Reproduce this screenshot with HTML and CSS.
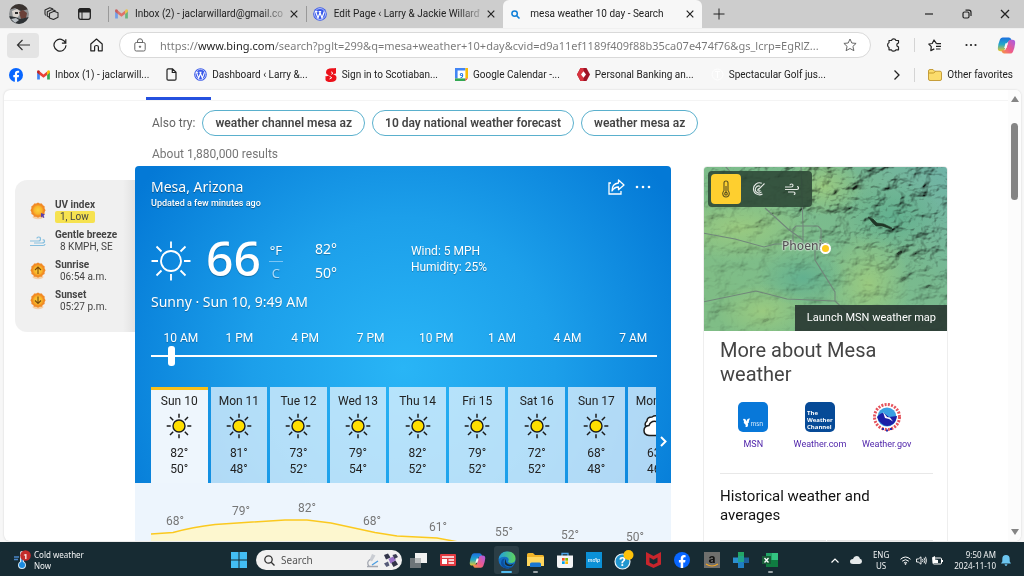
FILE: index.html
```html
<!DOCTYPE html>
<html lang="en">
<head>
<meta charset="utf-8">
<title>mesa weather 10 day - Search</title>
<link rel="stylesheet" href="styles.css">
</head>
<body>
<svg class="sprite" aria-hidden="true">
  <defs>
    <linearGradient id="cpA" x1="0" y1="0" x2="0" y2="1"><stop offset="0" stop-color="#1b6fe0"/><stop offset=".5" stop-color="#22a7c9"/><stop offset="1" stop-color="#e8c92c"/></linearGradient>
    <linearGradient id="cpB" x1="1" y1="0" x2="0" y2="1"><stop offset="0" stop-color="#a55de8"/><stop offset=".55" stop-color="#ee5a8b"/><stop offset="1" stop-color="#f99a3d"/></linearGradient>
    <linearGradient id="edgeA" x1="0" y1="0" x2="1" y2="0"><stop offset="0" stop-color="#1f9de0"/><stop offset="1" stop-color="#5fd45c"/></linearGradient>
    <radialGradient id="sunG"><stop offset="0" stop-color="#fcd03c"/><stop offset=".65" stop-color="#f8b62a"/><stop offset="1" stop-color="#f08a22"/></radialGradient>
  </defs>
  <symbol id="copilot" viewBox="0 0 20 20">
    <path d="M6 1.500h6.500q1.800 0 2.400 1.800l.8 2.500h-3q-1.600 0-2.100 1.600L8.200 14q-.6 2-2.600 2H3.800Q.6 16 .9 12.500 1.300 8 3.200 3.500 4 1.500 6 1.500z" fill="url(#cpA)"/>
    <path d="M14 18.500H7.500q-1.800 0-2.400-1.800L4.600 15h2.700q1.600 0 2.100-1.600L11.800 6q.6-2 2.600-2h1.800q3.200 0 2.900 3.500-.4 4.500-2.300 9-.8 2-2.800 2z" fill="url(#cpB)"/>
    <path d="M9 7.500h2.500L10 12.500H7.500z" fill="#f7f7f7"/>
  </symbol>
  <symbol id="gmail" viewBox="0 0 14 11">
    <path d="M0 1.500V10.500H3V5z" fill="#4285f4"/><path d="M14 1.500V10.500H11V5z" fill="#34a853"/>
    <path d="M3 1.700 7 5 11 1.700V5.400L7 8.600 3 5.400z" fill="#ea4335"/><path d="M0 1.500Q.5-.6 3 1.100V5.400L0 3z" fill="#c5221f"/><path d="M14 1.500Q13.500-.6 11 1.100V5.400L14 3z" fill="#fbbc04"/>
  </symbol>
  <symbol id="wp" viewBox="0 0 14 14">
    <circle cx="7" cy="7" r="6.800" fill="#3858e9"/><circle cx="7" cy="7" r="5.500" fill="none" stroke="#fff" stroke-width=".6"/>
    <path d="M2.700 4.700 5 11 7 5.600 9 11l2.300-6.500M2 4.600h2.500M5.600 4.600h2.600" fill="none" stroke="#fff" stroke-width="1.200"/>
  </symbol>
  <symbol id="fb" viewBox="0 0 16 16">
    <circle cx="8" cy="8" r="8" fill="#0866ff"/><path d="M6.700 15.900v-5.400H4.900V8h1.800V6.700C6.700 4.300 8 3.100 10 3.100l1.600.1v2.100h-.9C9.500 5.300 9.200 6 9.200 6.800V8h2.300l-.4 2.500H9.200v5.400z" fill="#fff"/>
  </symbol>
  <symbol id="x" viewBox="0 0 8 8"><path d="M.7.7 7.300 7.300M7.300.7.700 7.300" stroke="#222" stroke-width="1.200"/></symbol>
  <symbol id="daysun" viewBox="0 0 26 26">
    <circle cx="13" cy="13" r="6" fill="#ffdf00" stroke="#1c1c1c" stroke-width="1.400"/>
    <path d="M13 .7v4M13 21.300v4M.7 13h4M21.300 13h4M4 4l3.200 3.200M18.800 18.800 22 22M22 4l-3.200 3.200M7.200 18.800 4 22" stroke="#1c1c1c" stroke-width="1.500"/>
  </symbol>
  <symbol id="cog" viewBox="0 0 16 18">
    <ellipse cx="8" cy="15" rx="5.500" ry="2.200" fill="#f7b978" opacity=".6"/>
    <path d="M8 .5 9.800 1.500 11.900 1.500 12.900 3.300 14.600 4.300 14.600 6.400 15.600 8.200 14.600 10 14.600 12 12.800 13 11.800 14.800 9.800 14.800 8 15.800 6.200 14.800 4.200 14.800 3.200 13 1.400 12 1.400 10 .4 8.200 1.400 6.400 1.400 4.300 3.100 3.300 4.100 1.500 6.200 1.500z" fill="#f28a25"/>
    <circle cx="8" cy="8.200" r="5.800" fill="url(#sunG)"/>
  </symbol>
  <symbol id="chev" viewBox="0 0 8 12"><path d="M1.500 1.500 6 6 1.500 10.500" fill="none" stroke="currentColor" stroke-width="1.300"/></symbol>
</svg>

<header class="browser">
  <div class="tabstrip">
    <button class="plain slot" aria-label="Profile">
      <svg width="20" height="20" viewBox="0 0 20 20"><defs><clipPath id="av"><circle cx="10" cy="10" r="10"/></clipPath></defs><g clip-path="url(#av)"><path d="M0 0h20v20H0z" fill="#8d9092"/><path d="M0 0h20v5L12 7 6 4 0 6z" fill="#3a3330"/><path d="M3 7l5-2 4 3-3 5-5 1z" fill="#d9d4cf"/><path d="M10 8l4-2 4 3-1 5-5 1z" fill="#6a4038"/><path d="M0 12l6 1 5 2 9-2v7H0z" fill="#2d3134"/><path d="M2 15l5-1 3 2-4 3z" fill="#b9bfc4"/><path d="M6 8h3v2H6z" fill="#2b2b2b"/></g></svg>
    </button>
    <button class="plain slot" aria-label="Workspaces">
      <svg width="15" height="14" viewBox="0 0 15 14" fill="none" stroke="#2b2b2b" stroke-width="1.100" stroke-linejoin="round"><path d="M5.500 6.200 10 4.300l4 1.500v4.400l-4.500 2.300-4-1.600zM3.300 9.300V4.700L8 2.400l3.600 1.300M1 7.600V3L5.800.7l3.400 1.200M1 7.600l1.200.8M3.300 9.300l2.200 1"/></svg>
    </button>
    <button class="plain slot" aria-label="Tab actions">
      <svg width="13" height="12" viewBox="0 0 13 12"><rect x=".7" y=".7" width="11.600" height="10.600" rx="2" fill="none" stroke="#222" stroke-width="1.300"/><path d="M1 1h11v3H1zM4 3.500v8" stroke="#222" fill="#222"/></svg>
    </button>
    <nav class="tabs" aria-label="Open tabs">
      <div class="tab"><svg width="13" height="10" opacity=".65"><use href="#gmail"/></svg><a href="#" class="fade">Inbox (2) - jaclarwillard@gmail.co</a><button class="plain" aria-label="Close tab"><svg width="8" height="8"><use href="#x"/></svg></button></div>
      <div class="tab"><svg width="14" height="14"><use href="#wp"/></svg><a href="#" class="fade">Edit Page ‹ Larry &amp; Jackie Willard'</a><button class="plain" aria-label="Close tab"><svg width="8" height="8"><use href="#x"/></svg></button></div>
      <div class="tab active"><svg width="9" height="9" viewBox="0 0 9 9" fill="none" stroke="#0f7fd8" stroke-width="1.500"><circle cx="3.600" cy="3.600" r="2.700"/><path d="m5.600 5.600 2.900 2.900"/></svg><a href="#">mesa weather 10 day - Search</a><button class="plain" aria-label="Close tab"><svg width="8" height="8"><use href="#x"/></svg></button></div>
    </nav>
    <button class="plain slot" aria-label="New tab"><svg width="12" height="12" viewBox="0 0 12 12"><path d="M6 .5v11M.5 6h11" stroke="#222"/></svg></button>
    <div class="winctl">
      <button class="plain" aria-label="Minimize"><svg width="10" height="10"><path d="M1 5h8" stroke="#222" stroke-width="1.200"/></svg></button>
      <button class="plain" aria-label="Restore"><svg width="10" height="10" fill="none" stroke="#222" stroke-width="1.200"><rect x="1" y="3" width="6" height="6" rx="1.500"/><path d="M3.500 1.200h3.300q2.200 0 2.200 2.200V7"/></svg></button>
      <button class="plain" aria-label="Close"><svg width="10" height="10"><path d="m1 1 8 8M9 1 1 9" stroke="#222" stroke-width="1.300"/></svg></button>
    </div>
  </div>

  <div class="toolbar">
    <button class="plain back" aria-label="Back"><svg width="15" height="12" viewBox="0 0 15 12" fill="none" stroke="#333" stroke-width="1.200"><path d="M14 6H1.500M6.500 1l-5 5 5 5"/></svg></button>
    <button class="plain nav" aria-label="Refresh"><svg width="14" height="14" viewBox="0 0 14 14" fill="none" stroke="#222" stroke-width="1.200"><path d="M12.600 5A6 6 0 1 0 13 7.300M12.800 1.200v4H8.900"/></svg></button>
    <button class="plain nav" aria-label="Home"><svg width="13" height="14" viewBox="0 0 13 14" fill="none" stroke="#222" stroke-width="1.200"><path d="M.8 6 6.500 1l5.700 5v6.800H8.400V9q0-1.500-1.900-1.500T4.600 9v3.800H.8z" stroke-linejoin="round"/></svg></button>
    <div class="address">
      <svg width="12" height="14" viewBox="0 0 12 14" fill="none" stroke="#666"><rect x=".8" y="4.500" width="10.400" height="8.500" rx="1.500"/><path d="M3.500 4.500V3Q3.500.8 6 .8T8.500 3v1.500"/><circle cx="6" cy="8.700" r=".7" fill="#666"/></svg>
      <input type="text" aria-label="Address" value="https://www.bing.com/search?pglt=299&amp;q=mesa+weather+10+day&amp;cvid=d9a11ef1189f409f88b35ca07e474f76&amp;gs_lcrp=EgRlZ...">
      <button class="plain" aria-label="Add to favorites"><svg width="14" height="14" viewBox="0 0 14 14" fill="none" stroke="#666"><path d="m7 1 1.800 4 4.300.4-3.200 3 1 4.300L7 10.500l-3.900 2.200 1-4.300-3.200-3L5.200 5z" stroke-linejoin="round"/></svg></button>
    </div>
    <button class="plain ext" aria-label="Extensions"><svg width="14" height="14" viewBox="0 0 14 14" fill="none" stroke="#222" stroke-width="1.200"><path d="M2 2.500h2.500Q5 .9 6.700.9T9 2.500h2.500V5Q9.800 5.200 9.800 6.900t1.700 1.900v3H9Q8.500 13.200 6.700 13.200T4.500 11.800H2V9.500Q.6 8.800.6 7T2 4.700z" stroke-linejoin="round"/></svg></button>
    <i class="vsep"></i>
    <button class="plain" aria-label="Favorites"><svg width="14" height="13" viewBox="0 0 14 13" fill="none" stroke="#222" stroke-width="1.200"><path d="M8.500 4.600 6 1 4.200 4.500.8 5l2.500 2.600-.5 4 3.500-1.700M8.500 4.600H13M8 7.300h5M8 10h4.500" stroke-linejoin="round"/></svg></button>
    <button class="plain dots" aria-label="Settings and more"><svg width="12" height="4" fill="#222"><circle cx="1.500" cy="2" r="1.100"/><circle cx="6" cy="2" r="1.100"/><circle cx="10.500" cy="2" r="1.100"/></svg></button>
    <button class="plain" aria-label="Copilot"><svg width="19" height="19"><use href="#copilot"/></svg></button>
  </div>

  <nav class="bookmarks" aria-label="Favorites bar">
    <a href="#" aria-label="Facebook"><svg width="14" height="14"><use href="#fb"/></svg></a>
    <a href="#"><svg width="13" height="10"><use href="#gmail"/></svg><span>Inbox (1) - jaclarwill...</span></a>
    <a href="#" aria-label="Page"><svg width="11" height="13" viewBox="0 0 11 13" fill="none" stroke="#222" stroke-width="1.200"><path d="M1 2q0-1.200 1.200-1.200H6.500L10 4.300V11q0 1.200-1.200 1.200H2.200Q1 12.200 1 11zM6.300 1v3.500H10"/></svg></a>
    <a href="#"><svg width="13" height="13"><use href="#wp"/></svg><span>Dashboard ‹ Larry &amp;...</span></a>
    <a href="#"><svg width="12" height="14" viewBox="0 0 12 14"><path d="M11 0Q9 .3 7 .3 1 .5 1 4.200 1 6.500 4 7.300 1.700 8.500.500 8V12q1 2 5 2 6 0 6-4.300 0-2.600-3.500-3.500L11 5.500z" fill="#ec111a"/><path d="M6 3.700 8 5.300 6.300 6.300M4.500 8.300 6.800 9.700 4.500 11" stroke="#f7f7f7" fill="none"/></svg><span>Sign in to Scotiaban...</span></a>
    <a href="#"><svg width="13" height="13" viewBox="0 0 13 13"><path d="M0 0h13v13H0z" fill="#fff"/><path d="M0 0h10.500v2.600H2.600v8H0z" fill="#4285f4"/><path d="M10.400 0H13v10.400h-2.600z" fill="#fbbc04"/><path d="M0 10.400h10.400V13H0z" fill="#34a853"/><path d="M10.400 10.400H13L10.400 13z" fill="#ea4335"/><text x="6.500" y="9.500" class="cal">9</text></svg><span>Google Calendar -...</span></a>
    <a href="#"><svg width="13" height="13" viewBox="0 0 13 13"><path d="M3.500 0h6L13 6.500 9.500 13h-6L0 6.500z" fill="#a01226"/><path d="M3.500 0h3v4L4 6.500 6.500 9v4h-3L0 6.500z" fill="#d8333e"/><path d="M6.500 3.300 9 6.500 6.500 9.700 4 6.500z" fill="#fff"/></svg><span>Personal Banking an...</span></a>
    <a href="#"><svg width="13" height="13" viewBox="0 0 13 13" fill="none" stroke="#fff"><circle cx="6.500" cy="6.500" r="5.500"/><path d="M4 3.500h5M6.500 3.500v6.500"/></svg><span>Spectacular Golf jus...</span></a>
    <div class="bmend">
      <button class="plain" aria-label="More favorites"><svg width="8" height="12"><use href="#chev"/></svg></button>
      <i class="vsep"></i>
      <a href="#"><svg width="14" height="12" viewBox="0 0 14 12"><path d="M.5 2Q.5.5 2 .5h3l1.500 1.700H12q1.500 0 1.500 1.500V10q0 1.500-1.500 1.500H2Q.5 11.500.5 10z" fill="#fbdc6c" stroke="#b98a1c" stroke-width=".8"/><path d="M.8 4h5l1.500-1.500" fill="none" stroke="#b98a1c" stroke-width=".8"/></svg><span>Other favorites</span></a>
    </div>
  </nav>
</header>

<div class="viewport">
  <main class="page">
    <nav class="scope" aria-label="Search scope"><a href="#" aria-label="All results"></a></nav>
    <div class="try"><span>Also try:</span><a href="#">weather channel mesa az</a><a href="#">10 day national weather forecast</a><a href="#">weather mesa az</a></div>
    <p class="count">About 1,880,000 results</p>

    <div class="cols">
      <aside class="facts">
        <div class="fact"><svg width="16" height="18"><use href="#cog"/><path d="m11 11 4 1.500-1.500 1.200 1 1.500-1.200.8-1-1.500-1.300 1z" fill="#5b3fa8"/></svg><dl><dt>UV index</dt><dd class="low">1, Low</dd></dl></div>
        <div class="fact"><svg width="16" height="12" viewBox="0 0 16 12" fill="none" stroke="#86bfdf" stroke-width="1.200"><path d="M0 6h8.500q2 0 2-2T8.700 2 7 3.500M4 8h8q2.500 0 2.500-1.700T12.700 4.800M0 10.500h13q2 0 2-1.500"/></svg><dl><dt>Gentle breeze</dt><dd>8 KMPH, SE</dd></dl></div>
        <div class="fact"><svg width="16" height="18"><use href="#cog"/><path d="M8 12V5M5 8l3-3 3 3" fill="none" stroke="#7a4a0a" stroke-width="1.100"/></svg><dl><dt>Sunrise</dt><dd>06:54 a.m.</dd></dl></div>
        <div class="fact"><svg width="16" height="18"><use href="#cog"/><path d="M8 4.500v7M5 8.500l3 3 3-3" fill="none" stroke="#7a4a0a" stroke-width="1.100"/></svg><dl><dt>Sunset</dt><dd>05:27 p.m.</dd></dl></div>
      </aside>

      <section class="weather">
        <div class="sky">
          <div class="whead">
            <div><h2>Mesa, Arizona</h2><p class="upd">Updated a few minutes ago</p></div>
            <div class="acts">
              <button class="plain" aria-label="Share"><svg width="17" height="16" viewBox="0 0 17 16" fill="none" stroke="#fff" stroke-width="1.300"><path d="M3 4H1v11h12v-3"/><path d="M10.500 1 16 6l-5.500 4.700V8Q6.500 7.800 4 12q0-7.500 6.500-8z" stroke-linejoin="round"/></svg></button>
              <button class="plain" aria-label="More"><svg width="16" height="4" fill="#fff"><circle cx="2" cy="2" r="1.300"/><circle cx="8" cy="2" r="1.300"/><circle cx="14" cy="2" r="1.300"/></svg></button>
            </div>
          </div>
          <div class="now">
            <svg width="40" height="40" viewBox="0 0 40 40" fill="none" stroke="#fff" stroke-width="1.800"><circle cx="20" cy="20" r="10"/><path d="M20 .5v6.500M20 33v6.500M.5 20H7M33 20h6.500M5.500 5.500l5 5M29.500 29.500l5 5M34.500 5.500l-5 5M10.500 29.500l-5 5"/></svg>
            <strong>66</strong>
            <div class="units"><a href="#">°F</a><a href="#" class="c">C</a></div>
            <div class="hilo"><span>82°</span><span>50°</span></div>
            <div class="wind">Wind: 5 MPH<br>Humidity: 25%</div>
          </div>
          <p class="cond">Sunny · Sun 10, 9:49 AM</p>
          <div class="hours"><span>10 AM</span><span>1 PM</span><span>4 PM</span><span>7 PM</span><span>10 PM</span><span>1 AM</span><span>4 AM</span><span>7 AM</span></div>
          <input class="time" type="range" min="0" max="200" value="7" aria-label="Hour of day">
          <div class="dayrow">
            <div class="days">
              <button class="day on"><span>Sun 10</span><svg width="26" height="26"><use href="#daysun"/></svg><span>82°</span><span>50°</span></button>
              <button class="day"><span>Mon 11</span><svg width="26" height="26"><use href="#daysun"/></svg><span>81°</span><span>48°</span></button>
              <button class="day"><span>Tue 12</span><svg width="26" height="26"><use href="#daysun"/></svg><span>73°</span><span>52°</span></button>
              <button class="day"><span>Wed 13</span><svg width="26" height="26"><use href="#daysun"/></svg><span>79°</span><span>54°</span></button>
              <button class="day"><span>Thu 14</span><svg width="26" height="26"><use href="#daysun"/></svg><span>82°</span><span>52°</span></button>
              <button class="day"><span>Fri 15</span><svg width="26" height="26"><use href="#daysun"/></svg><span>79°</span><span>52°</span></button>
              <button class="day"><span>Sat 16</span><svg width="26" height="26"><use href="#daysun"/></svg><span>72°</span><span>52°</span></button>
              <button class="day"><span>Sun 17</span><svg width="26" height="26"><use href="#daysun"/></svg><span>68°</span><span>48°</span></button>
              <button class="day"><span>Mon 18</span><svg width="26" height="26" viewBox="0 0 26 26" fill="#fff" stroke="#1c1c1c" stroke-width="1.500"><path d="M3.500 14q-3-3 .5-6 0-4 5-4 4-3 8 1 6 0 5 6v5H8z"/><path d="M6 22.500q-5-.5-5-5t5-5q2-5 7-4t6 5q5 0 5 4.500t-5 4.500z"/></svg><span>63°</span><span>46°</span></button>
            </div>
            <button class="plain next" aria-label="Next days"><svg width="7" height="11" viewBox="0 0 7 11"><path d="M1 1l4.500 4.500L1 10" fill="none" stroke="#fff" stroke-width="2"/></svg></button>
          </div>
        </div>
        <svg class="chart" viewBox="0 0 536 90" role="img" aria-label="Hourly temperatures">
          <path d="M16 51 38 49.500Q58 44 80 41.500L150 37H172L196 40 240 49.500 262 53 302 55 345 63 520 76V90H16z" fill="#fdf7cf"/>
          <path d="M16 51 38 49.500Q58 44 80 41.500L150 37H172L196 40 240 49.500 262 53 302 55 345 63 520 76" fill="none" stroke="#fbc91f" stroke-width="1.500"/>
          <text x="40" y="42">68°</text><text x="106" y="32">79°</text><text x="172" y="29">82°</text><text x="237" y="42">68°</text><text x="303" y="48">61°</text><text x="369" y="53">55°</text><text x="435" y="56">52°</text><text x="500" y="58">50°</text>
        </svg>
      </section>

      <aside class="side">
        <div class="map">
          <svg class="terrain" viewBox="0 0 245 165" preserveAspectRatio="xMidYMid slice" aria-hidden="true">
            <defs>
              <linearGradient id="land" x1="0" y1=".6" x2="1" y2="0"><stop offset="0" stop-color="#7fbd86"/><stop offset=".35" stop-color="#7dbd8c"/><stop offset=".65" stop-color="#78b98f"/><stop offset="1" stop-color="#6fb3a8"/></linearGradient>
              <radialGradient id="warm"><stop offset="0" stop-color="#9aca80"/><stop offset="1" stop-color="#9aca80" stop-opacity="0"/></radialGradient>
              <radialGradient id="cool"><stop offset="0" stop-color="#62b08f"/><stop offset="1" stop-color="#62b08f" stop-opacity="0"/></radialGradient>
              <filter id="relief" x="0" y="0" width="1" height="1"><feTurbulence type="fractalNoise" baseFrequency=".05 .07" numOctaves="5" seed="8"/><feDiffuseLighting surfaceScale="9" diffuseConstant="1.200" lighting-color="#fff"><feDistantLight azimuth="225" elevation="55"/></feDiffuseLighting></filter>
              <linearGradient id="mg" x1=".3" y1=".75" x2=".62" y2=".32"><stop offset="0" stop-color="#333"/><stop offset=".6" stop-color="#555"/><stop offset="1" stop-color="#ddd"/></linearGradient>
              <mask id="hills"><path d="M0 0h245v165H0z" fill="url(#mg)"/></mask>
            </defs>
            <path d="M0 0h245v165H0z" fill="url(#land)"/>
            <ellipse cx="35" cy="62" rx="75" ry="34" fill="url(#warm)"/><ellipse cx="165" cy="118" rx="42" ry="55" fill="url(#warm)"/><ellipse cx="60" cy="145" rx="48" ry="28" fill="url(#warm)"/><ellipse cx="120" cy="20" rx="40" ry="30" fill="url(#warm)"/>
            <ellipse cx="100" cy="112" rx="45" ry="28" fill="url(#cool)"/><ellipse cx="190" cy="50" rx="50" ry="35" fill="url(#cool)"/>
            <g mask="url(#hills)" class="mul"><path d="M0 0h245v165H0z" filter="url(#relief)"/></g>
            <path d="M0 67 32 73 61 81 72 78 90 78M22 0l9 10M62 42 85 63 100 74M98 0l2 60M90 78V63l3-3h22l3 3v16M100 60v18M112 84v10l20 32v9M0 136l53-11 31 8 48 2M132 135l32 30" fill="none" stroke="#71867a" stroke-width="1.100"/>
            <path d="M165 51l5 2 4 4 7 1 8 4-1 1-9-3-6 0-4-4z" fill="#203527" stroke="#203527" stroke-width=".6"/>
          </svg>
          <div class="layers">
            <button class="plain lit" aria-label="Temperature"><svg width="8" height="18" viewBox="0 0 8 18" fill="none" stroke="#5b5020" stroke-width="1.100"><path d="M2 10.500V3q0-2 2-2t2 2v7.500Q7.300 12 7.300 13.500 7 17 4 17T.7 13.500Q.7 12 2 10.500zM4 6v7"/><circle cx="4" cy="13.700" r="1.300"/></svg></button>
            <button class="plain" aria-label="Radar"><svg width="15" height="14" viewBox="0 0 15 14" fill="none" stroke="#e4e8e4" stroke-width="1.100"><path d="M10.800 1.300A6 6 0 1 0 11.500 12M9.200 4.200A3.500 3.500 0 1 0 10.500 9.800M8.500 6.800A1.200 1.200 0 1 0 9.200 8.200M7.500 7.500 13.500 1.500"/></svg></button>
            <button class="plain" aria-label="Wind"><svg width="14" height="12" viewBox="0 0 14 12" fill="none" stroke="#e4e8e4" stroke-width="1.200"><path d="M0 4h6q2 0 2-1.500T6.500 1 5 2.300M0 6.500h11.500q2 0 2-1.500t-1.500-1.400M3 9h5.500q1.500 0 1.500 1.200t-1.200 1.300"/></svg></button>
          </div>
          <span class="city">Phoenix</span><i class="pin"></i>
          <a class="launch" href="#">Launch MSN weather map</a>
        </div>
        <div class="more">
          <h2>More about Mesa weather</h2>
          <div class="links">
            <a href="#"><svg width="30" height="30" viewBox="0 0 30 30"><rect width="30" height="30" rx="5" fill="#0878d9"/><path d="M5 17q3-1 3.500 2.500Q9 16 12 16.500q-1 2-1.200 3 .8 1-1 2 1 1-.5 3.500H7.500q.7-2-.5-3-2-1-1-2.500z" fill="#fff"/><text x="12.500" y="24" class="msn">msn</text></svg>MSN</a>
            <a href="#"><svg width="30" height="30" viewBox="0 0 30 30"><rect width="30" height="30" rx="5" fill="#064a97"/><g class="twc"><text x="2" y="13">The</text><text x="2" y="20">Weather</text><text x="2" y="27">Channel</text></g></svg>Weather.com</a>
            <a href="#"><svg width="30" height="30" viewBox="0 0 30 30"><circle cx="15" cy="15" r="12.500" fill="none" stroke="#e5535c" stroke-width="3" stroke-dasharray="2 1.300"/><circle cx="15" cy="15" r="10.500" fill="#fff"/><circle cx="15" cy="15" r="9.500" fill="#3aa0e2"/><path d="M5 15q5-6 8-3l4 3 8-1q-1 6-4 8-6 4-11 0-4-3-5-7z" fill="#1c1fa6"/><path d="m11 10 4 5 3 .5 3 4-4-2.500-4-1z" fill="#fff"/><path d="M10 27h2M14 28.500h2M18 27h2" stroke="#2a2fa8" stroke-width="2"/></svg>Weather.gov</a>
          </div>
          <h3>Historical weather and averages</h3>
          <div class="bars"><i></i><i></i></div>
        </div>
      </aside>
    </div>
  </main>
  <div class="scroll" aria-hidden="true"><svg width="8" height="6"><path d="M4 0l4 6H0z" fill="#858585"/></svg><i></i><svg width="8" height="6"><path d="M0 0h8L4 6z" fill="#858585"/></svg></div>
</div>

<footer class="taskbar">
  <a class="news" href="#"><svg width="18" height="20" viewBox="0 0 18 20"><path d="M1 7h5M1 9.500h4" stroke="#4a86c8" stroke-width="1.500"/><path d="M7 3q0-2 2-2t2 2v8.500q2 1.200 2 3.500 0 4-4 4t-4-4q0-2.300 2-3.500z" fill="#d7ebf8"/><circle cx="9" cy="15" r="3" fill="#1c8be0"/><path d="M8.300 7h1.500v7H8.300z" fill="#1c8be0"/><circle cx="12.500" cy="5.500" r="5.300" fill="#c42b2b"/><text x="12.500" y="8.500" class="badge">1</text></svg><span>Cold weather<br>Now</span></a>
  <button class="plain start" aria-label="Start"><svg width="16" height="16"><path d="M0 0h7.500v7.500H0zM8.500 0H16v7.500H8.500zM0 8.500h7.500V16H0zM8.500 8.500H16V16H8.500z" fill="#43bdf3"/></svg></button>
  <label class="search"><svg width="11" height="11" viewBox="0 0 11 11" fill="none" stroke="#333" stroke-width="1.300"><circle cx="4.500" cy="4.500" r="3.700"/><path d="m7.200 7.200 3.300 3.300"/></svg><input type="search" placeholder="Search" aria-label="Search"><svg width="32" height="15" viewBox="0 0 32 15"><path d="M6 1l3.500 1.500-3.500 6-2.500-1.500z" fill="#c9ccd2"/><path d="M4 6.500q-4 3-1 6.500M1 13.500h11" fill="none" stroke="#a3a7b0" stroke-width="1.300"/><path d="M6 12l6-4" stroke="#4c9de0" stroke-width="1.300"/><path d="M18 2l4-1.500 2.500 4-4.500 2zM25 9.500l4.500-2 2.500 4-4.500 2.500z" fill="#33354a"/><path d="M22.500 6l4.500-2.500L30 7l-5.500 3.500z" fill="#9a72c9"/><path d="M18 10.500l4-2 1.500 4-3 1.500z" fill="#565b78"/><path d="M26.500 2l3.500-1 2 3-3.500 2z" fill="#3c3e55"/></svg></label>
  <nav class="apps" aria-label="Taskbar">
    <button class="plain" aria-label="Task view"><svg width="17" height="15"><path d="M0 5h11v10H0z" fill="#6d7478"/><path d="M5 0h12v10H5z" fill="#f1f1f1"/><path d="M5 5h6v5H5z" fill="#b9bcbd"/></svg></button>
    <button class="plain" aria-label="News"><svg width="16" height="12"><rect width="16" height="12" rx="1" fill="#e33a40"/><path d="M2 3h12M8.500 6h5.500M8.500 9h5.500" stroke="#fff" stroke-width="1.300"/><path d="M2 5h5v5H2z" fill="#fff"/></svg></button>
    <button class="plain" aria-label="Copilot"><svg width="17" height="17"><use href="#copilot"/></svg></button>
    <button class="plain run cur" aria-label="Edge"><svg width="18" height="18" viewBox="0 0 18 18"><circle cx="9" cy="9" r="8.500" fill="#1470c4"/><path d="M.7 8Q2 .5 9 .5q8 0 8.500 7 0 4-4 4.500-3 0-3.500-1.500 2-3-1.500-4.500Q4 5 .7 8z" fill="url(#edgeA)"/><path d="M7 7.500Q4 11 7 14.500t9 0q-3 3-7 3-6-.5-6-6 .5-4 4-4z" fill="#0c4f9e"/><path d="M8 8q-1 4 3 5.500 3 .5 5-1-2 3.500-6 2.500T7 11q-.3-2 1-3z" fill="#172b33"/></svg></button>
    <button class="plain run" aria-label="File Explorer"><svg width="17" height="14"><path d="M0 1.500Q0 0 1.500 0H6l2 2h7.500Q17 2 17 3.500V13H0z" fill="#f0b429"/><path d="M0 4h17v9H0z" fill="#ffd75e"/><path d="M3 14v-3q0-1.500 1.500-1.500h8Q14 9.500 14 11v3z" fill="#1976d2"/></svg></button>
    <button class="plain" aria-label="Store"><svg width="16" height="16"><path d="M5 4V1.500h6V4" fill="none" stroke="#4aa3e6" stroke-width="1.300"/><path d="M0 3.500h16V14q0 2-2 2H2q-2 0-2-2z" fill="#f3f5f6"/><path d="M5 6h2.700v2.700H5z" fill="#f25022"/><path d="M8.300 6H11v2.700H8.300z" fill="#7fba00"/><path d="M5 9.300h2.700V12H5z" fill="#00a4ef"/><path d="M8.300 9.300H11V12H8.300z" fill="#ffb900"/></svg></button>
    <button class="plain" aria-label="mdip"><svg width="16" height="16"><path d="M0 0h16v16H0z" fill="#0b91d6"/><text x="8" y="10" class="mydp">mdip</text></svg></button>
    <button class="plain" aria-label="Help"><svg width="20" height="20" viewBox="0 0 20 20"><circle cx="8.500" cy="11.500" r="7.500" fill="#2196cf" stroke="#e8f4fa" stroke-width="1.200"/><text x="8.500" y="16" class="help">?</text><circle cx="14.500" cy="5" r="5" fill="#fdc20a"/></svg></button>
    <button class="plain" aria-label="McAfee"><svg width="15" height="16"><path d="M0 0 7.500 4 15 0v12.500L7.500 16 0 12.500zM3.500 5.500v5L7.500 12.500l4-2v-5L7.500 7.700z" fill="#c8252c" fill-rule="evenodd"/></svg></button>
    <button class="plain" aria-label="Facebook"><svg width="16" height="16"><use href="#fb"/></svg></button>
    <button class="plain" aria-label="Amazon"><svg width="16" height="16"><path d="M0 0h16v16H0z" fill="#6f6f6d"/><text x="8" y="11" class="amz">a</text><path d="M2 12q6 4 12 0" fill="none" stroke="#f5a623" stroke-width="1.200"/></svg></button>
    <button class="plain" aria-label="Health"><svg width="16" height="16"><path d="M5 0h6v6H5z" fill="#23a566"/><path d="M5 5h6v11H5z" fill="#1f7fc4"/><path d="M0 5.500h5.500v5.500H0z" fill="#2b8fd0"/><path d="M10.500 5.500H16v5.500h-5.500z" fill="#1d5f9b"/><path d="M5 4h6v6H5z" fill="#20a38a"/></svg></button>
    <button class="plain run" aria-label="Excel"><svg width="16" height="14"><path d="M4 0h12v14H4z" fill="#21a366"/><path d="M10 0h6v7h-6z" fill="#33c481"/><path d="M4 7h12v7H4z" fill="#107c41"/><path d="M0 3h9v8H0z" fill="#185c37"/><path d="m2.500 5 4 4.500M6.500 5l-4 4.500" stroke="#fff" stroke-width="1.300"/></svg></button>
  </nav>
  <div class="tray">
    <button class="plain" aria-label="Hidden icons"><svg width="8" height="5"><path d="M.5 4.500 4 1l3.500 3.500" fill="none" stroke="#fff" stroke-width="1.200"/></svg></button>
    <svg width="12" height="8" viewBox="0 0 12 8"><path d="M3 8Q0 8 0 5.500T3 3q1-3 4-3 2.500 0 3 2.700 2 .3 2 2.700T9.500 8z" fill="#e6eaeb"/></svg>
    <span class="lang">ENG<br>US</span>
    <span class="net">
      <svg width="11" height="9" viewBox="0 0 11 9" fill="none" stroke="#fff"><path d="M.5 3.300Q5.500-1.300 10.500 3.300M2.200 5.200q3.300-3 6.600 0M3.900 7q1.600-1.400 3.200 0"/><circle cx="5.500" cy="8" r=".5"/></svg>
      <svg width="11" height="9" viewBox="0 0 11 9" fill="none" stroke="#fff"><path d="M.5 3h1.800L5 .8v7.400L2.300 6H.5zM6.500 3q1 1.500 0 3M8 1.800q2 2.700 0 5.400M9.500.8q2 3.700 0 7.400" stroke-width=".9"/></svg>
      <svg width="11" height="9" viewBox="0 0 11 9"><rect x="1" y="2" width="8.500" height="6" rx="1" fill="none" stroke="#fff"/><path d="M0 1.500 3 0v3.500L6 4v3H1z" fill="#fff"/><path d="M10 4h1v2h-1z" fill="#fff"/></svg>
    </span>
    <time>9:50 AM<br>2024-11-10</time>
    <button class="plain" aria-label="Notifications"><svg width="10" height="11" viewBox="0 0 10 11"><path d="M5 0q3.700 0 3.700 4v2.500L10 8.500H0l1.300-2V4Q1.300 0 5 0zM3.500 9.300h3Q6 11 5 11T3.500 9.300z" fill="#6cc5f0"/></svg></button>
  </div>
</footer>
</body>
</html>
```
FILE: styles.css
```css
* { box-sizing: border-box; }
body {
  margin: 0;
  height: 100vh;
  display: flex;
  flex-direction: column;
  overflow: hidden;
  background: #f7f7f7;
  color: #222;
  font: 12px/16px Roboto, "Liberation Sans", sans-serif;
}
h2, h3, p, dl, dd { margin: 0; font-weight: 400; }
a { color: inherit; text-decoration: none; }
svg { display: block; flex: none; }
.sprite { position: absolute; width: 0; height: 0; }
input { font: inherit; border: 0; background: none; padding: 0; min-width: 0; }
.plain {
  border: 0;
  padding: 0;
  background: none;
  color: #222;
  display: flex;
  align-items: center;
  justify-content: center;
}
.vsep { width: 1px; height: 14px; background: #d4d4d4; }

/* Browser chrome */
.browser { flex: none; font-size: 10px; }
.tabstrip { display: flex; height: 28px; background: #cdcdcd; padding-left: 2px; }
.slot { width: 33px; }
.tabs { display: flex; flex: 0 1 594px; min-width: 0; margin-left: 7px; }
.tab {
  flex: 1 1 0;
  min-width: 0;
  display: flex;
  align-items: center;
  gap: 7px;
  padding: 0 8px 0 7px;
  position: relative;
}
.tab a { flex: 1; overflow: hidden; white-space: nowrap; }
.tab:not(.active)::before {
  content: "";
  width: 1px;
  height: 16px;
  background: #999;
  position: absolute;
  left: 0;
}
.tab.active { background: #f7f7f7; border-radius: 6px 6px 0 0; gap: 10px; padding-left: 8px; }
.fade { mask-image: linear-gradient(90deg, #000 85%, #0004); }
.winctl { display: flex; margin-left: auto; }
.winctl button { width: 38px; }

.toolbar { display: flex; align-items: center; height: 33px; padding: 0 8px 0 7px; gap: 13px; border-top: 1px solid #f0f0f0; }
.back { width: 32px; height: 25px; background: #e4e4e4; border-radius: 4px; }
.nav { width: 16px; }
.nav + .nav { margin: 0 5px 0 7px; }
.address {
  flex: 1;
  display: flex;
  align-items: center;
  gap: 14px;
  height: 26px;
  margin-left: -3px;
  padding: 0 13px 0 14px;
  background: #fff;
  border: 1px solid #d9d9d9;
  border-radius: 13px;
}
.address input {
  flex: 1;
  height: 20px;
  font-family: "Noto Sans", "Open Sans", sans-serif;
  font-size: 11px;
  color: transparent;
  background: linear-gradient(90deg, #777 38px, #1d1d1d 38px 115px, #777 115px);
  background-clip: text;
}
.ext { margin-left: 3px; }
.dots { margin: 0 7px 0 10px; }

.bookmarks { display: flex; align-items: center; height: 29px; padding: 0 11px 2px 9px; white-space: nowrap; }
.bookmarks a { display: flex; align-items: center; gap: 5px; margin-right: 17px; }
.bookmarks > a:first-child { margin-right: 14px; }
.bookmarks .bmend a { margin: 0; }
.bmend { display: flex; align-items: center; gap: 13px; margin-left: auto; }
.cal { font: 700 7px Roboto, sans-serif; fill: #1a73e8; text-anchor: middle; }

/* Page frame */
.viewport {
  flex: 1;
  min-height: 0;
  display: flex;
  margin: 0 3px 1px 4px;
  background: #fff;
  border-radius: 6px;
  overflow: hidden;
  box-shadow: 0 0 2px #ccc;
}
.page { flex: 1; min-width: 0; overflow: hidden; }
.scroll { width: 13px; display: flex; flex-direction: column; align-items: center; padding: 6px 0; background: #fcfcfc; }
.scroll i { width: 7px; height: 77px; margin: 21px 0 auto; border-radius: 4px; background: #858585; }

.scope { height: 11px; padding-left: 142px; border-bottom: 1px solid #f4f4f4; }
.scope a { display: block; width: 65px; height: 10px; border-bottom: 3px solid #2450df; }
.try { display: flex; align-items: center; gap: 7px; padding: 9px 0 0 148px; color: #666; white-space: nowrap; }
.try a { height: 26px; padding: 4px 12px; border: 1px solid #5ab0cd; border-radius: 13px; font-weight: 600; color: #444; }
.count { padding: 10px 0 4px 148px; color: #767676; }

.cols {
  display: grid;
  grid-template-columns: 120px minmax(0, 536fr) minmax(0, 277fr);
  padding: 0 60px 0 11px;
  align-items: start;
}

.facts {
  display: grid;
  gap: 6px;
  margin-top: 14px;
  padding: 19px 0 19px 15px;
  border-radius: 12px 0 0 12px;
  background: linear-gradient(90deg, #f0f0f0 90%, #e2e2e2);
  font-size: 10px;
  line-height: 12px;
  color: #444;
}
.fact { display: flex; align-items: center; gap: 9px; height: 24px; }
.fact dt { font-weight: 700; }
.fact dd { padding-left: 5px; }
.fact .low { background: #f6e250; border-radius: 2px; }

/* Weather card */
.weather { border-radius: 4px 4px 0 0; overflow: hidden; background: #edf5fd; }
.sky {
  padding: 11px 0 0 16px;
  color: #fff;
  background: radial-gradient(circle at 50% 64%, #29b5f6, #1c9fea 45%, #0479d6 95%);
}
.whead { display: flex; justify-content: space-between; padding-right: 20px; text-shadow: 0 1px 1px #0006; }
.whead h2, .cond, .now { font-family: "Noto Sans", "Open Sans", sans-serif; }
.whead h2 { font-size: 14px; line-height: 20px; }
.upd { font-size: 9px; line-height: 12px; font-weight: 500; }
.acts { display: flex; gap: 10px; height: 20px; }
.now { display: flex; align-items: center; height: 52px; margin-top: 26px; text-shadow: 0 1px 1px #0004; }
.now strong { margin: 0 8px 6px 15px; font-size: 48px; line-height: 52px; font-weight: 500; }
.units { display: grid; width: 14px; margin-right: 32px; font-size: 13px; line-height: 22px; text-align: center; }
.units .c { border-top: 1px solid #7cc6f5; color: #a9dafa; }
.hilo { display: grid; width: 96px; font-size: 14px; line-height: 24px; }
.wind { margin-bottom: 4px; font: 12px/16px Roboto, sans-serif; }
.cond { margin-top: 5px; font-size: 14px; line-height: 20px; text-shadow: 0 1px 1px #0004; }
.hours { display: grid; grid-template-columns: repeat(8, 1fr); margin: 18px 5px 0 -10px; text-align: center; text-shadow: 0 1px 1px #0004; }
.hours span:first-child { padding-left: 14px; }
.time { appearance: none; display: block; width: calc(100% - 14px); height: 20px; margin: 0; }
.time::-webkit-slider-runnable-track { height: 2px; background: #fff; }
.time::-webkit-slider-thumb { appearance: none; width: 7px; height: 20px; margin-top: -9px; border-radius: 3px; background: #fff; }
.dayrow { display: flex; align-items: center; margin-top: 21px; }
.days {
  flex: 1;
  min-width: 0;
  display: grid;
  grid-auto-flow: column;
  grid-auto-columns: calc((100% - 24px) / 17 * 2);
  gap: 3px;
  overflow: hidden;
}
.day {
  display: flex;
  flex-direction: column;
  align-items: center;
  height: 96px;
  padding: 6px 0 5px;
  border: 0;
  background: #eef6fdb8;
  color: #222;
  font: inherit;
  white-space: nowrap;
}
.day svg { margin: 4px 0 6px; }
.day.on { background: #eef6fd; box-shadow: inset 0 3px #f8c01a; }
.next { width: 15px; height: 20px; margin-top: 12px; }
.chart { width: 100%; font: 12px Roboto, sans-serif; fill: #767676; text-anchor: middle; }

/* Side column */
.side { margin-left: 32px; border: 1px solid #eee; border-radius: 4px 4px 0 0; overflow: hidden; }
.map { position: relative; height: 164px; margin: -1px -1px 0; }
.terrain { width: 100%; height: 165px; }
.mul { mix-blend-mode: multiply; }
.layers { position: absolute; left: 5px; top: 5px; display: flex; padding: 3px; border-radius: 4px; background: #2f4937e6; }
.layers button { width: 34px; height: 30px; border-radius: 4px; }
.layers .lit { width: 30px; background: #fecf2f; }
.city { position: absolute; left: 79px; top: 72px; font: 500 12px/16px "Noto Sans", sans-serif; color: #555; text-shadow: 0 0 2px #fff, 0 0 2px #fff; }
.pin { position: absolute; left: 117px; top: 77px; width: 11px; height: 11px; border-radius: 50%; border: 2px solid #fff; background: #fdca1f; }
.launch { position: absolute; right: 0; bottom: -1px; padding: 5px 12px; background: #2a3a33eb; color: #fff; font-size: 11px; }
.more { padding: 8px 14px 0 16px; }
.more h2 { font-size: 20px; line-height: 24px; color: #444; }
.links {
  display: grid;
  grid-template-columns: repeat(3, 1fr);
  margin-top: 16px;
  padding: 0 13px 23px 0;
  border-bottom: 1px solid #e8e8e8;
  text-align: center;
  font-size: 9px;
  line-height: 12px;
  color: #4b1fa8;
}
.links svg { margin: 0 auto 6px; }
.more h3 { margin: 13px 0 15px; font-size: 15px; line-height: 19px; color: #111; }
.bars { display: flex; gap: 1px; }
.bars i { flex: 1; height: 8px; background: #e6e6e6; }
.msn { font: 7px Lato, sans-serif; fill: #cfe6fa; }
.twc { font: 700 6px "Open Sans", sans-serif; fill: #fff; }

/* Taskbar */
.taskbar {
  flex: none;
  display: flex;
  align-items: center;
  height: 34px;
  padding: 2px 13px 0;
  background: #172b33;
  color: #f2f4f5;
  font: 8px/11px "Noto Sans", "Open Sans", sans-serif;
}
.news { display: flex; align-items: center; gap: 3px; width: 218px; }
.badge { font: 700 8px Roboto, sans-serif; fill: #fff; text-anchor: middle; }
.start { width: 16px; }
.search { display: flex; align-items: center; gap: 6px; width: 146px; height: 20px; margin-left: 9px; padding: 0 4px 0 8px; border-radius: 10px; background: #f1f1f1; font-size: 10px; }
.search input { flex: 1; outline: 0; }
.search input::placeholder { color: #555; }
.apps { display: grid; grid-template-columns: repeat(13, 1fr); width: 381px; margin-left: 2px; }
.apps button { height: 28px; position: relative; }
.run::after { content: ""; position: absolute; bottom: 1px; width: 5px; height: 2px; border-radius: 1px; background: #9aa4a8; }
.apps .cur { margin: 0 2px; border-radius: 3px; background: #2b3e46; }
.cur::after { width: 11px; background: #53bdf0; }
.mydp { font: italic 6px Lato, sans-serif; fill: #fff; text-anchor: middle; }
.help { font: 700 13px Roboto, sans-serif; fill: #fff; text-anchor: middle; }
.amz { font: 700 13px Roboto, sans-serif; fill: #111; text-anchor: middle; }
.tray { display: flex; align-items: center; gap: 11px; margin-left: auto; }
.lang { text-align: center; }
.net { display: flex; gap: 5px; }
.tray time { text-align: right; margin-right: -6px; }
```
